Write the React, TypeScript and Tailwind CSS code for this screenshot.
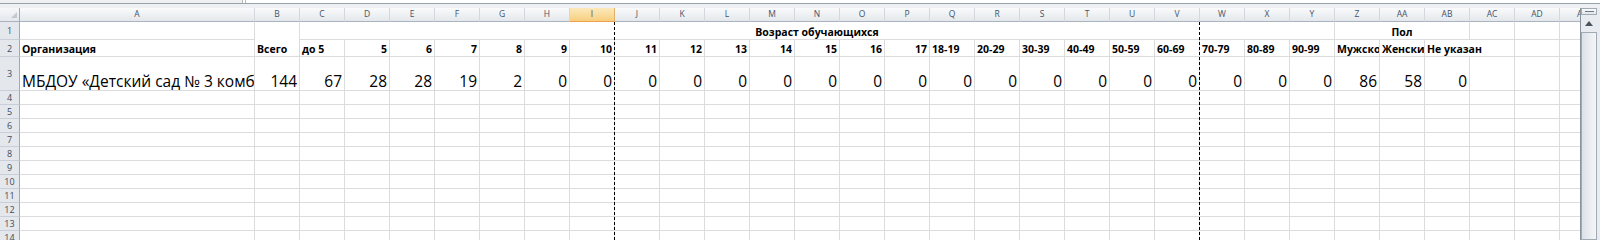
import React from "react";

const LETTERS = [
  "A","B","C","D","E","F","G","H","I","J","K","L","M","N","O","P","Q","R","S","T","U","V","W","X","Y","Z","AA","AB","AC","AD","AE",
];

const GRID = "border-r border-b border-[#dadcdd]";

function HeaderCell({ label }: { label: string }) {
  const active = label === "I";
  return (
    <div
      className={
        active
          ? "flex items-center justify-center overflow-hidden border-r border-b border-r-[#e0b36c] border-b-[#f0a04a] bg-linear-to-b from-[#fce9bb] to-[#f6cf7e] text-[8.5px] leading-none text-[#5b4a2a]"
          : "flex items-center justify-center overflow-hidden border-r border-b border-r-[#d3d8de] border-b-[#aab4bf] bg-linear-to-b from-[#f9fafb] to-[#e4e8ec] text-[8.5px] leading-none text-[#44526a]"
      }
    >
      {label}
    </div>
  );
}

function RowHeader({ n }: { n: number }) {
  return (
    <div className="flex items-center justify-center border-r border-b border-r-[#9eaab6] border-b-[#c8cfd8] bg-[#e4e8ed] text-[9px] leading-none text-[#3f4b5b]">
      {n}
    </div>
  );
}

function Empty() {
  return <div className={GRID} />;
}

const row2Right = ["5", "6", "7", "8", "9", "10", "11", "12", "13", "14", "15", "16", "17"];
const row2Left = ["18-19", "20-29", "30-39", "40-49", "50-59", "60-69", "70-79", "80-89", "90-99", "Мужско", "Женски"];
const row3 = [144, 67, 28, 28, 19, 2, 0, 0, 0, 0, 0, 0, 0, 0, 0, 0, 0, 0, 0, 0, 0, 0, 0, 0, 86, 58, 0];

export default function App() {
  const emptyRows = [4, 5, 6, 7, 8, 9, 10, 11, 12, 13, 14];
  const fullRow = Array.from({ length: 31 }, (_, i) => i);

  return (
    <div className="h-[240px] w-[1600px] overflow-hidden bg-white font-['Open_Sans','Noto_Sans',sans-serif] text-black">
      {/* formula bar edge */}
      <div className="flex h-[8px] flex-col">
        <div className="flex h-[3px]">
          <div className="w-[243px] border-r border-[#b4b9bf] bg-[#eef0f2]" />
          <div className="w-[2px] bg-white" />
          <div className="flex-1 border-l border-[#b4b9bf] bg-white" />
        </div>
        <div className="h-px bg-[#9aa2ac]" />
        <div className="h-[4px] bg-[#eef0f3]" />
      </div>

      <div className="flex h-[232px]">
        <div className="relative flex-1 overflow-hidden">
          <div className="grid w-max grid-cols-[20px_235px_repeat(30,45px)] grid-rows-[14px_18px_17px_34px_repeat(11,14px)]">
            {/* column headers */}
            <div className="relative border-r border-b border-r-[#9eaab6] border-b-[#aab4bf] bg-linear-to-b from-[#f6f7f9] to-[#e4e8ec]">
              <svg className="absolute left-[11px] top-[4px]" width="6" height="6" viewBox="0 0 6 6">
                <polygon points="6,0 6,6 0,6" fill="#c3c9d1" />
              </svg>
            </div>
            {LETTERS.map((l) => (
              <HeaderCell key={l} label={l} />
            ))}

            {/* row 1 */}
            <RowHeader n={1} />
            <Empty />
            <div className="row-span-2 flex items-end border-r border-b border-[#dadcdd] pb-[2px] pl-[2px] text-[10.5px] font-bold leading-none">
              Всего
            </div>
            <div className="col-span-23 flex items-end justify-center border-r border-b border-[#dadcdd] pb-[2px] text-[10.5px] font-bold leading-none">
              Возраст обучающихся
            </div>
            <div className="col-span-3 flex items-end justify-center border-r border-b border-[#dadcdd] pb-[2px] text-[10.5px] font-bold leading-none">
              Пол
            </div>
            <Empty />
            <Empty />
            <Empty />

            {/* row 2 */}
            <RowHeader n={2} />
            <div className="flex items-end border-r border-b border-[#dadcdd] pb-[2px] pl-[2px] text-[10.5px] font-bold leading-none">
              Организация
            </div>
            <div className="flex items-end border-r border-b border-[#dadcdd] pb-[2px] pl-[2px] text-[10.5px] font-bold leading-none">
              до 5
            </div>
            {row2Right.map((t) => (
              <div
                key={t}
                className="flex items-end justify-end border-r border-b border-[#dadcdd] pb-[2px] pr-[2px] text-[10.5px] font-bold leading-none"
              >
                {t}
              </div>
            ))}
            {row2Left.map((t) => (
              <div
                key={t}
                className="flex items-end overflow-hidden whitespace-nowrap border-r border-b border-[#dadcdd] pb-[2px] pl-[2px] text-[10.5px] font-bold leading-none"
              >
                {t}
              </div>
            ))}
            <div className="col-span-2 flex items-end whitespace-nowrap border-r border-b border-[#dadcdd] pb-[2px] pl-[2px] text-[10.5px] font-bold leading-none">
              Не указан
            </div>
            <Empty />
            <Empty />

            {/* row 3 */}
            <RowHeader n={3} />
            <div className="flex items-end overflow-hidden whitespace-nowrap border-r border-b border-[#dadcdd] pb-[1px] pl-[2px] text-[15.5px] leading-none">
              МБДОУ «Детский сад № 3 комб
            </div>
            {row3.map((v, i) => (
              <div
                key={i}
                className="flex items-end justify-end border-r border-b border-[#dadcdd] pb-[1px] pr-[2px] text-[15.5px] leading-none"
              >
                {v}
              </div>
            ))}
            <Empty />
            <Empty />
            <Empty />

            {/* empty rows */}
            {emptyRows.map((r) => (
              <React.Fragment key={r}>
                <RowHeader n={r} />
                {fullRow.map((c) => (
                  <Empty key={c} />
                ))}
              </React.Fragment>
            ))}
          </div>

          {/* page break lines */}
          <div className="absolute bottom-0 left-[614px] top-[14px] w-px [background:repeating-linear-gradient(to_bottom,#000_0px,#000_3px,transparent_3px,transparent_5px)]" />
          <div className="absolute bottom-0 left-[1199px] top-[14px] w-px [background:repeating-linear-gradient(to_bottom,#000_0px,#000_3px,transparent_3px,transparent_5px)]" />
        </div>

        {/* vertical scrollbar */}
        <div className="flex w-[20px] flex-col border-l border-[#8a929c] bg-[#e8ebef] pr-[3px]">
          <div className="flex h-[7px] items-center justify-center border border-[#a3abb5] bg-linear-to-b from-[#fbfcfd] to-[#e0e4ea]">
            <div className="h-px w-[9px] bg-[#6d7682]" />
          </div>
          <div className="flex h-[17px] items-center justify-center">
            <svg width="8" height="5" viewBox="0 0 8 5">
              <polygon points="4,0 8,5 0,5" fill="#4a5360" />
            </svg>
          </div>
          <div className="flex-1 border border-[#a2aab4] bg-linear-to-r from-[#dde1e8] to-[#f4f5f8]" />
        </div>
      </div>
    </div>
  );
}
